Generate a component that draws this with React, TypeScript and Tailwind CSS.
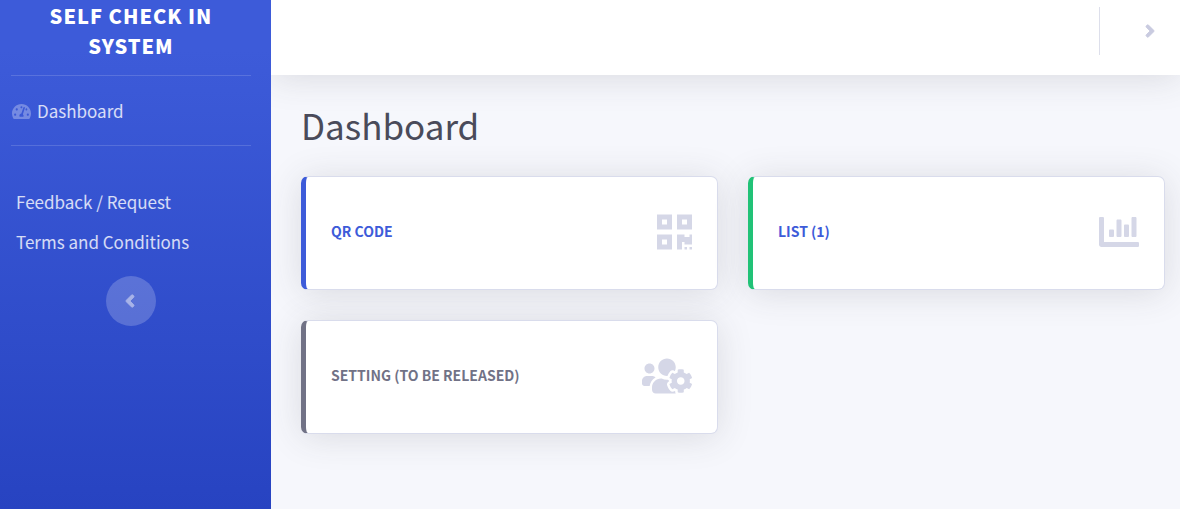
import type { ReactNode } from 'react';
import { FaAngleLeft, FaAngleRight, FaChartBar, FaQrcode, FaTachometerAlt, FaUsersCog } from 'react-icons/fa';

type CardProps = {
  title: string;
  accent: string;
  text: string;
  icon: ReactNode;
};

function MenuCard({ title, accent, text, icon }: CardProps) {
  return (
    <a
      href="#"
      className={`flex items-center justify-between h-[114px] px-[25px] pb-[2px] bg-white rounded-[7px] border border-l-[5px] border-y-[#d9dcec] border-r-[#d9dcec] shadow-[0_3px_35px_0_rgba(58,59,69,0.15)] ${accent}`}
    >
      <span className={`pb-[3px] text-[14px] leading-5 font-bold uppercase ${text}`}>{title}</span>
      <span className="text-[40px] text-[#d5d7e7]">{icon}</span>
    </a>
  );
}

function Sidebar() {
  return (
    <nav className="w-[271px] shrink-0 pl-[11px] pr-5 bg-linear-to-b from-[#3d5bd9] from-10% to-[#2743c1]">
      <a href="#" className="block pt-px pb-[14px] text-center text-[20px] leading-[30px] font-extrabold tracking-[1px] uppercase text-white">
        Self Check In System
      </a>
      <hr className="border-white/15" />
      <a href="#" className="flex items-center h-[69px] pl-px gap-[6px] text-[17px] text-white/80">
        <FaTachometerAlt className="mt-[2px] text-[19px] text-white/30" />
        Dashboard
      </a>
      <hr className="border-white/15" />
      <ul className="pt-9 pl-[5px] text-[17px] leading-10 text-white/80">
        <li>
          <a href="#">Feedback / Request</a>
        </li>
        <li>
          <a href="#">Terms and Conditions</a>
        </li>
      </ul>
      <button
        aria-label="Toggle sidebar"
        className="flex items-center justify-center mx-auto mt-[14px] pr-[2px] w-[50px] h-[50px] rounded-full bg-white/20 text-[20px] text-[#a8b3e8]"
      >
        <FaAngleLeft strokeWidth={22} />
      </button>
    </nav>
  );
}

function App() {
  return (
    <div
      lang="en"
      className="flex min-h-screen bg-[#f6f7fc] font-['Noto_Sans_CJK_JP','Source_Sans_3',sans-serif]"
    >
      <Sidebar />
      <div className="flex-1 min-w-0 overflow-hidden">
        {/* Topbar */}
        <header className="flex justify-end items-start h-[75px] pt-[7px] pr-5 bg-white shadow-[0_3px_35px_0_rgba(58,59,69,0.15)]">
          <div className="flex items-center justify-end w-[61px] h-12 pb-px border-l border-[#dddfeb]">
            <button aria-label="Open user menu" className="text-[20px] text-[#c9cbe0]">
              <FaAngleRight strokeWidth={22} />
            </button>
          </div>
        </header>

        <main className="pl-[30px] pr-[15px] pt-[26px] pb-8">
          <h1 className="mb-[27px] text-[35px] leading-[48px] text-[#4a4b5a]">Dashboard</h1>
          <div className="grid grid-cols-2 gap-[30px]">
            <MenuCard title="QR Code" accent="border-l-[#3d5bd9]" text="text-[#3d5bd9]" icon={<FaQrcode className="w-[35px]" />} />
            <MenuCard title="List (1)" accent="border-l-[#21c277]" text="text-[#3d5bd9]" icon={<FaChartBar />} />
            <MenuCard
              title="Setting (To be released)"
              accent="border-l-[#717286]"
              text="text-[#717286]"
              icon={<FaUsersCog className="w-[50px]" />}
            />
          </div>
        </main>
      </div>
    </div>
  );
}

export default App;
